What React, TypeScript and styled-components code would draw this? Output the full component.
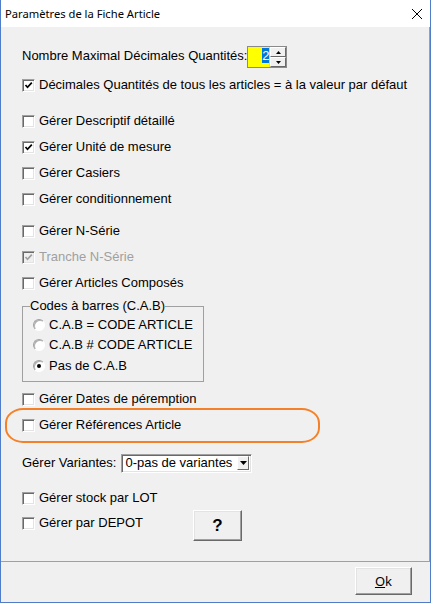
import React from "react";
import styled, { createGlobalStyle } from "styled-components";

const Global = createGlobalStyle`
  html, body { margin: 0; padding: 0; background: #ffffff; }
  * { box-sizing: border-box; }
`;

const Window = styled.div`
  width: 431px;
  height: 603px;
  border-left: 1px solid #4f7dc9;
  border-right: 1px solid #4f7dc9;
  border-bottom: 1px solid #4f7dc9;
  background: #f0f0f0;
  display: flex;
  flex-direction: column;
  font-family: "Liberation Sans", Arial, sans-serif;
  font-size: 13px;
  color: #000;
`;

const TitleBar = styled.div`
  height: 27px;
  background: #ffffff;
  display: flex;
  align-items: center;
  justify-content: space-between;
  padding: 0 7px 0 4px;
  font-family: "Noto Sans", "Open Sans", sans-serif;
  font-size: 11.2px;
  color: #000;
`;

const TitleText = styled.span`
  position: relative;
  top: 0px;
`;

const Panel = styled.div`
  height: 535px;
  border-right: 1px solid #a0a0a0;
  border-bottom: 1px solid #a0a0a0;
  padding: 19px 0 0 21px;
  display: flex;
  flex-direction: column;
`;

const Row = styled.div<{ $mt?: number; $top?: boolean }>`
  display: flex;
  align-items: ${(p) => (p.$top ? "flex-start" : "center")};
  min-height: 20px;
  margin-top: ${(p) => p.$mt ?? 0}px;
`;

const Label = styled.span<{ $disabled?: boolean }>`
  line-height: 20px;
  white-space: nowrap;
  color: ${(p) => (p.$disabled ? "#a0a0a0" : "#000")};
`;

const CheckItem = styled.div<{ $width?: number; $mt?: number }>`
  display: flex;
  align-items: center;
  height: 20px;
  width: ${(p) => (p.$width ? `${p.$width}px` : "auto")};
  margin-top: ${(p) => p.$mt ?? 0}px;
`;

const Box = styled.span<{ $disabled?: boolean }>`
  width: 13px;
  height: 13px;
  flex: none;
  margin-right: 4px;
  border: 1px solid;
  border-color: #a0a0a0 #ffffff #ffffff #a0a0a0;
  box-shadow: inset 1px 1px 0 #696969, inset -1px -1px 0 #e3e3e3;
  background: ${(p) => (p.$disabled ? "#f0f0f0" : "#ffffff")};
  display: flex;
  align-items: center;
  justify-content: center;
`;

const Checkbox: React.FC<{ checked?: boolean; disabled?: boolean; label: string; width?: number; mt?: number }> = ({
  checked,
  disabled,
  label,
  width,
  mt,
}) => (
  <CheckItem $width={width} $mt={mt}>
    <Box $disabled={disabled}>
      {checked && (
        <svg width="9" height="9" viewBox="0 0 9 9">
          <path d="M1.5 4 L3.5 6.3 L7.8 1.6" fill="none" stroke={disabled ? "#a0a0a0" : "#000"} strokeWidth="1.7" />
        </svg>
      )}
    </Box>
    <Label $disabled={disabled}>{label}</Label>
  </CheckItem>
);

const Spinner = styled.div`
  display: flex;
  height: 22px;
  margin-top: 0px;
  border: 1px solid #8a8a8a;
  background: #f0f0f0;
`;

const SpinInput = styled.div`
  width: 22px;
  background: #ffff00;
  display: flex;
  align-items: flex-start;
  justify-content: flex-end;
  padding-top: 1px;
  border-right: 1px solid #e0e060;
`;

const Selected = styled.span`
  background: #0078d7;
  color: #ffffff;
  line-height: 15px;
`;

const SpinCol = styled.div`
  width: 16px;
  display: flex;
  flex-direction: column;
`;

const SpinBtn = styled.div`
  flex: 1;
  border: 1px solid;
  border-color: #ffffff #696969 #696969 #ffffff;
  background: #f0f0f0;
  display: flex;
  align-items: center;
  justify-content: center;
`;

const Tri: React.FC<{ down?: boolean; w?: number }> = ({ down, w = 5 }) => (
  <svg width={w} height={Math.ceil(w / 2)} viewBox={`0 0 ${w} ${Math.ceil(w / 2)}`}>
    {down ? (
      <polygon points={`0,0 ${w},0 ${w / 2},${Math.ceil(w / 2)}`} fill="#000" />
    ) : (
      <polygon points={`0,${Math.ceil(w / 2)} ${w},${Math.ceil(w / 2)} ${w / 2},0`} fill="#000" />
    )}
  </svg>
);

const GroupBox = styled.fieldset`
  width: 182px;
  margin: 6px 0 0 0;
  padding: 2px 0 5px 7px;
  border: 1px solid #a0a0a0;
  border-radius: 0;
  display: flex;
  flex-direction: column;
`;

const Legend = styled.legend`
  padding: 0;
  margin: 0;
  line-height: 14px;
  font-size: 13px;
`;

const RadioItem = styled.div<{ $mt?: number }>`
  display: flex;
  align-items: center;
  height: 20px;
  margin-left: 3px;
  margin-top: ${(p) => p.$mt ?? 0}px;
`;

const RadioCircle = styled.span`
  width: 12px;
  height: 12px;
  flex: none;
  border-radius: 50%;
  margin-right: 4px;
  border: 1px solid;
  border-color: #a0a0a0 #ffffff #ffffff #a0a0a0;
  box-shadow: inset 1px 1px 0 #b0b0b0;
  background: #ffffff;
  display: flex;
  align-items: center;
  justify-content: center;
`;

const Dot = styled.span`
  width: 4px;
  height: 4px;
  border-radius: 50%;
  background: #000;
`;

const Radio: React.FC<{ checked?: boolean; label: string; mt?: number }> = ({ checked, label, mt }) => (
  <RadioItem $mt={mt}>
    <RadioCircle>{checked && <Dot />}</RadioCircle>
    <Label>{label}</Label>
  </RadioItem>
);

const Highlight = styled.div`
  position: relative;
  margin-top: 6px;
  &::before {
    content: "";
    position: absolute;
    left: -17px;
    top: -7px;
    width: 311px;
    height: 31px;
    border: 2px solid #f5802a;
    border-radius: 18px / 15px;
    pointer-events: none;
  }
`;

const Combo = styled.div`
  width: 131px;
  height: 19px;
  margin-left: 5px;
  background: #ffffff;
  border: 1px solid;
  border-color: #a0a0a0 #ffffff #ffffff #a0a0a0;
  box-shadow: inset 1px 1px 0 #696969, inset -1px -1px 0 #e3e3e3;
  display: flex;
  align-items: center;
  justify-content: space-between;
  padding: 0 2px 0 3px;
`;

const ComboText = styled.span`
  line-height: 16px;
`;

const ComboBtn = styled.div`
  width: 12px;
  height: 14px;
  border: 1px solid;
  border-color: #ffffff #696969 #696969 #ffffff;
  background: #f0f0f0;
  display: flex;
  align-items: center;
  justify-content: center;
`;

const PushButton = styled.button<{ $w: number; $h: number; $bold?: boolean }>`
  width: ${(p) => p.$w}px;
  height: ${(p) => p.$h}px;
  margin: 0;
  padding: 0;
  background: #f0f0f0;
  border: 1px solid;
  border-color: #ffffff #696969 #696969 #ffffff;
  box-shadow: inset -1px -1px 0 #a0a0a0, inset 1px 1px 0 #e3e3e3;
  font-family: ${(p) => (p.$bold ? `"Liberation Sans", Arial, sans-serif` : `"Noto Sans", "Open Sans", sans-serif`)};
  font-size: ${(p) => (p.$bold ? "17px" : "13px")};
  font-weight: ${(p) => (p.$bold ? 700 : 400)};
  color: #000;
  display: flex;
  align-items: center;
  justify-content: center;
`;

const Footer = styled.div`
  flex: 1;
  display: flex;
  justify-content: flex-end;
  padding: 5px 18px 0 0;
`;

const U = styled.span`
  text-decoration: underline;
`;

export default function App() {
  return (
    <>
      <Global />
      <Window>
        <TitleBar>
          <TitleText>Paramètres de la Fiche Article</TitleText>
          <svg width="12" height="12" viewBox="0 0 12 12">
            <path d="M1 1 L11 11 M11 1 L1 11" stroke="#000" strokeWidth="1" />
          </svg>
        </TitleBar>
        <Panel>
          <Row $top>
            <Label>Nombre Maximal Décimales Quantités:</Label>
            <Spinner>
              <SpinInput>
                <Selected>2</Selected>
              </SpinInput>
              <SpinCol>
                <SpinBtn>
                  <Tri w={5} />
                </SpinBtn>
                <SpinBtn>
                  <Tri down w={5} />
                </SpinBtn>
              </SpinCol>
            </Spinner>
          </Row>
          <Checkbox mt={7} checked label="Décimales Quantités de tous les articles = à la valeur par défaut" />
          <Checkbox mt={16} label="Gérer Descriptif détaillé" />
          <Checkbox mt={6} checked label="Gérer Unité de mesure" />
          <Checkbox mt={6} label="Gérer Casiers" />
          <Checkbox mt={6} label="Gérer conditionnement" />
          <Checkbox mt={12} label="Gérer N-Série" />
          <Checkbox mt={6} checked disabled label="Tranche N-Série" />
          <Checkbox mt={6} label="Gérer Articles Composés" />
          <GroupBox>
            <Legend>Codes à barres (C.A.B)</Legend>
            <Radio label="C.A.B = CODE ARTICLE" />
            <Radio label="C.A.B # CODE ARTICLE" />
            <Radio mt={1} checked label="Pas de C.A.B" />
          </GroupBox>
          <Checkbox mt={7} label="Gérer Dates de péremption" />
          <Highlight>
            <Checkbox label="Gérer Références Article" />
          </Highlight>
          <Row $mt={18}>
            <Label>Gérer Variantes:</Label>
            <Combo>
              <ComboText>0-pas de variantes</ComboText>
              <ComboBtn>
                <Tri down w={7} />
              </ComboBtn>
            </Combo>
          </Row>
          <Checkbox mt={15} label="Gérer stock par LOT" />
          <Row $mt={2} $top>
            <Checkbox mt={3} width={171} label="Gérer par DEPOT" />
            <PushButton $w={49} $h={31} $bold>
              ?
            </PushButton>
          </Row>
        </Panel>
        <Footer>
          <PushButton $w={57} $h={28}>
            <U>O</U>k
          </PushButton>
        </Footer>
      </Window>
    </>
  );
}
